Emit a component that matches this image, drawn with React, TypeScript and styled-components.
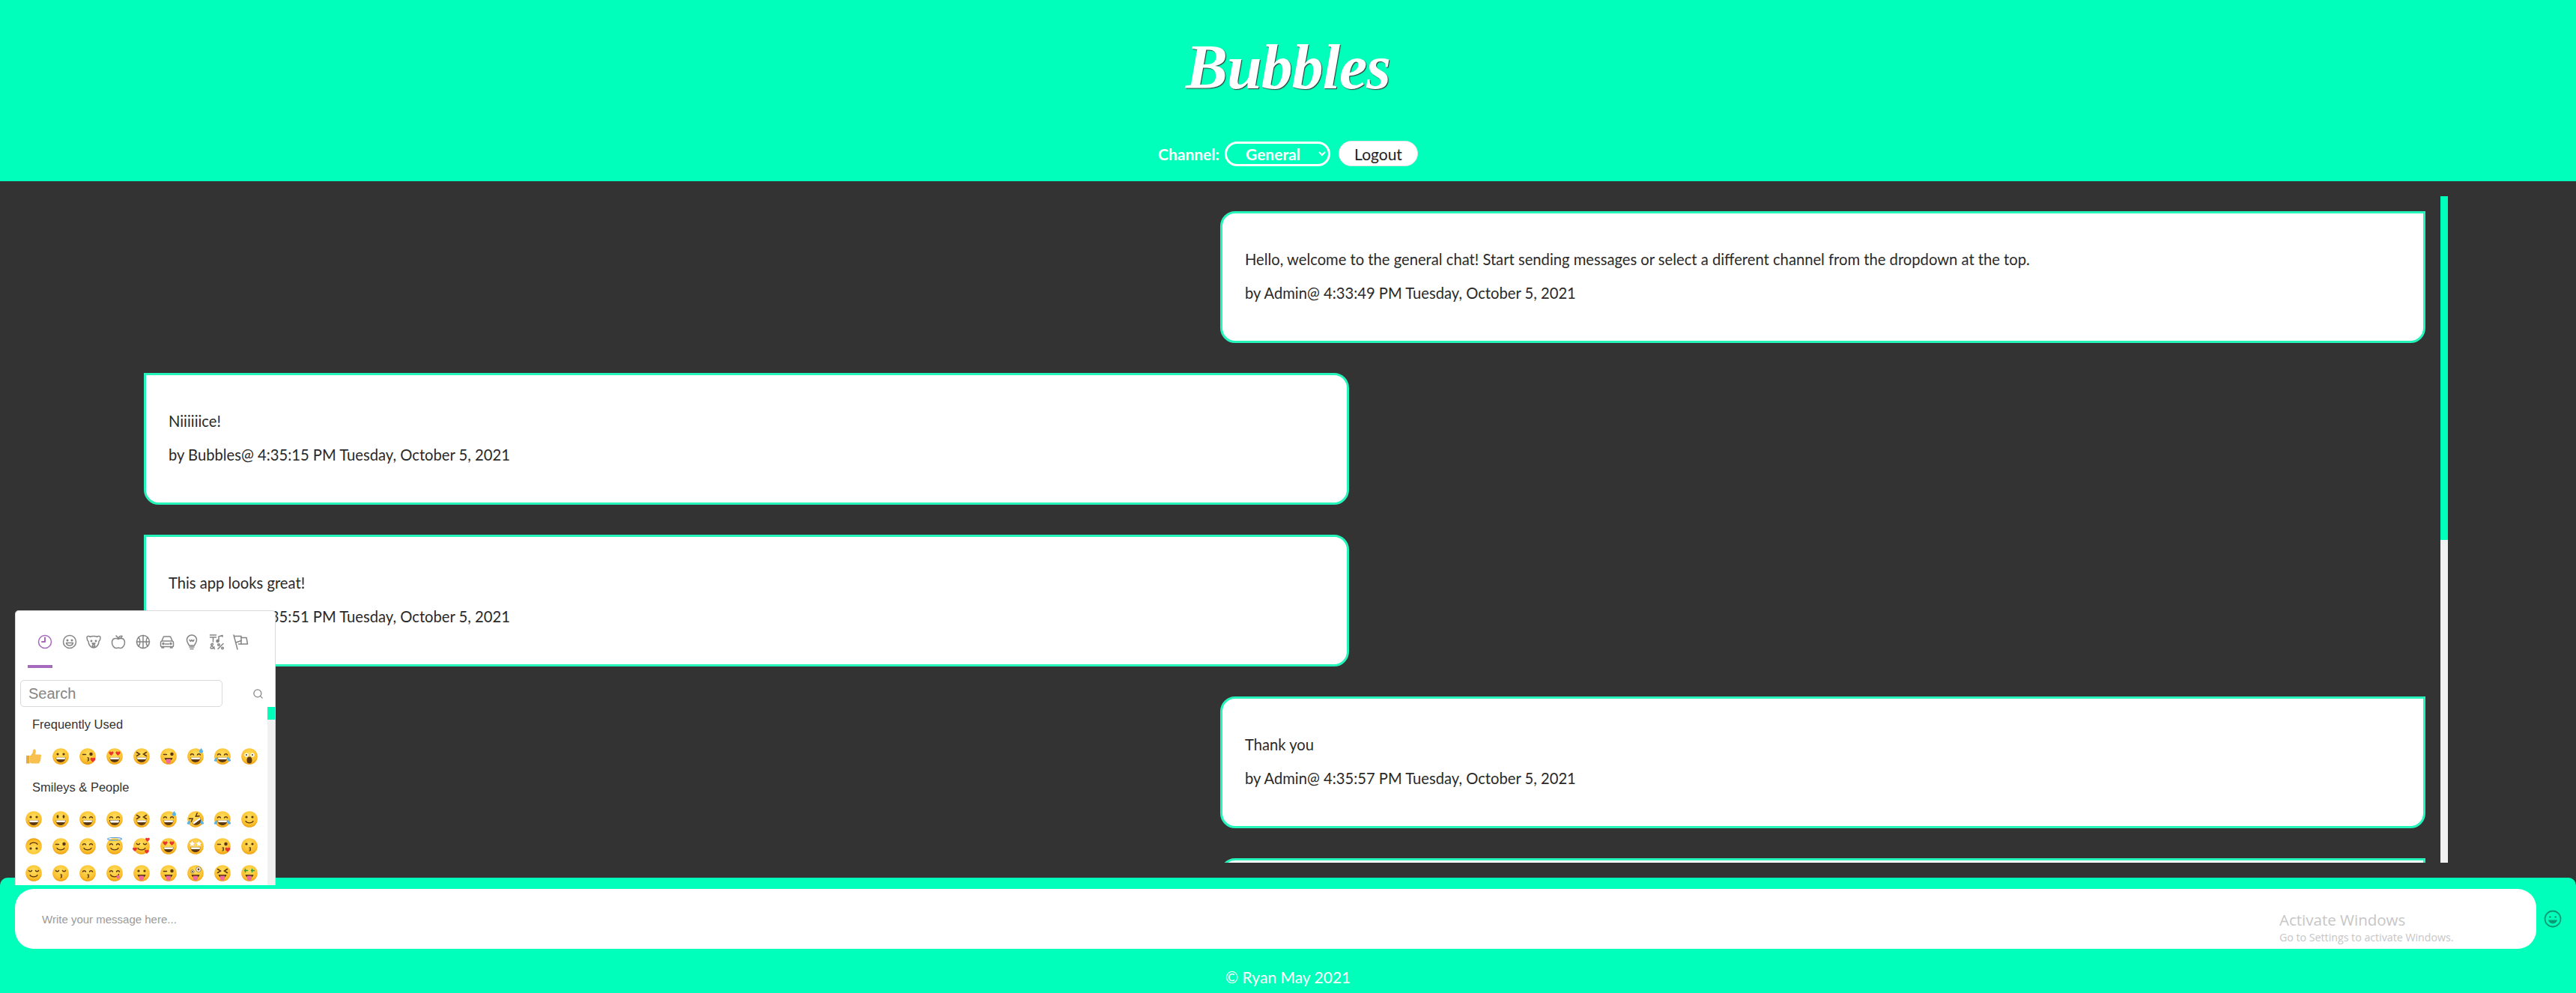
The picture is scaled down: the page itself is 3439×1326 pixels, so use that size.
import React from 'react'
import styled, { createGlobalStyle } from 'styled-components'
import { Search as SearchIcon } from 'lucide-react'

const GREEN = '#00ffba'
const FONT = 'Lato, "Open Sans", sans-serif'
const PICKER_FONT = '"Liberation Sans", Arial, sans-serif'

const GlobalStyle = createGlobalStyle`
  html, body {
    margin: 0;
    padding: 0;
    height: 100%;
    background: #333;
    overflow: hidden;
  }
  * { box-sizing: border-box; }
`

const Page = styled.div`
  height: 100vh;
  display: flex;
  flex-direction: column;
  font-family: ${FONT};
`

const Header = styled.header`
  height: 242px;
  background: ${GREEN};
  display: flex;
  flex-direction: column;
  align-items: center;
  flex: none;
`

const Logo = styled.h1`
  margin: 40px 0 0;
  height: 148px;
  font-family: "Liberation Serif", serif;
  font-style: italic;
  font-weight: 700;
  font-size: 84px;
  line-height: 100px;
  letter-spacing: -1px;
  color: #fff;
  text-shadow: 1px 1px 1px #333;
`

const Controls = styled.div`
  display: flex;
  align-items: center;
  height: 34px;
`

const ChannelLabel = styled.label`
  width: 89px;
  color: #fff;
  font-size: 21px;
  font-weight: 700;
`

const ChannelSelect = styled.select`
  width: 141px;
  height: 33px;
  border: 3px solid #fff;
  border-radius: 18px;
  background: transparent;
  color: #fff;
  font-family: ${FONT};
  font-size: 21px;
  font-weight: 700;
  text-align: center;
  outline: none;
`

const LogoutButton = styled.button`
  margin-left: 11px;
  width: 106px;
  height: 34px;
  border: 1px solid #e4e4e4;
  border-radius: 18px;
  background: #fff;
  color: #222;
  font-family: ${FONT};
  font-size: 21px;
  font-weight: 400;
`

const Main = styled.main`
  flex: 1;
  min-height: 0;
  background: #333;
  padding: 20px 171px 20px 172px;
  display: flex;
`

const MessageList = styled.div`
  flex: 1;
  overflow: hidden;
  padding: 20px 20px 0;
  display: flex;
  flex-direction: column;
  gap: 40px;
`

const ScrollTrack = styled.div<{ $width: number }>`
  flex: none;
  width: ${(p) => p.$width}px;
  background: #f1f1f1;
`

const ScrollThumb = styled.div<{ $height: number }>`
  height: ${(p) => p.$height}px;
  background: ${GREEN};
`

const Bubble = styled.div<{ $own?: boolean }>`
  flex: none;
  width: 1609px;
  height: 176px;
  align-self: ${(p) => (p.$own ? 'flex-end' : 'flex-start')};
  background: #fff;
  border: 3px solid #25f4bb;
  border-radius: ${(p) => (p.$own ? '20px 0 20px 20px' : '0 20px 20px 20px')};
  padding: 49px 30px 0;
  color: #2a2a2a;
  font-size: 20.2px;
  font-weight: 400;
`

const MessageLine = styled.p`
  margin: 0 0 20px;
  line-height: 25px;
  white-space: nowrap;
`

const Footer = styled.footer`
  position: relative;
  flex: none;
  height: 154px;
  background: ${GREEN};
  border-radius: 10px 10px 0 0;
  padding: 15px 20px 0;
`

const InputRow = styled.div`
  display: flex;
  align-items: center;
  gap: 10px;
`

const MessageInput = styled.input`
  flex: 1;
  height: 80px;
  border: none;
  border-radius: 25px;
  background: #fff;
  padding: 0 36px;
  font-family: ${PICKER_FONT};
  font-size: 15px;
  outline: none;
  &::placeholder { color: #9a9a9a; }
`

const SmileButton = styled.span`
  display: flex;
  width: 24px;
  height: 24px;
  margin-right: -1px;
  color: #0a9a75;
`

const Copyright = styled.div`
  margin-top: 25px;
  text-align: center;
  color: #fff;
  font-size: 21px;
  font-weight: 400;
`

const Watermark = styled.div`
  position: absolute;
  left: 3043px;
  top: 43px;
  font-family: "Open Sans", sans-serif;
  color: #c6c6c6;
  pointer-events: none;
`

const WatermarkTitle = styled.div`
  font-size: 20.5px;
  line-height: 27px;
  font-weight: 400;
`

const WatermarkText = styled.div`
  font-size: 14.2px;
  line-height: 19px;
  white-space: nowrap;
`

const Picker = styled.div`
  position: absolute;
  left: 20px;
  bottom: 144px;
  width: 348px;
  height: 367px;
  z-index: 5;
  background: #fff;
  border: 1px solid #d9d9d9;
  border-bottom: none;
  border-radius: 5px 5px 0 0;
  font-family: ${PICKER_FONT};
  display: flex;
  flex-direction: column;
`

const TabRow = styled.div`
  flex: none;
  display: flex;
  padding: 29px 0 0 22.5px;
`

const Tab = styled.span<{ $active?: boolean }>`
  display: flex;
  justify-content: center;
  width: 32.7px;
  height: 24px;
  color: ${(p) => (p.$active ? '#a569bd' : '#858585')};
`

const TabMark = styled.div`
  flex: none;
  width: 33px;
  height: 4px;
  margin: 19px 0 0 16px;
  background: #a569bd;
`

const SearchRow = styled.div`
  flex: none;
  display: flex;
  align-items: center;
  justify-content: space-between;
  padding: 16px 15px 0 6px;
  color: #858585;
`

const SearchInput = styled.input`
  width: 270px;
  height: 36px;
  border: 1px solid #d9d9d9;
  border-radius: 5px;
  padding: 0 10px;
  font-family: ${PICKER_FONT};
  font-size: 20px;
  outline: none;
  &::placeholder { color: #858585; }
`

const EmojiPane = styled.div`
  flex: 1;
  min-height: 0;
  display: flex;
`

const EmojiScroll = styled.div`
  flex: 1;
  overflow: hidden;
  padding-left: 6px;
`

const CategoryLabel = styled.div`
  padding: 13px 0 15px 16px;
  font-size: 16.5px;
  line-height: 20px;
  color: #333;
`

const EmojiGrid = styled.div`
  display: grid;
  grid-template-columns: repeat(9, 36px);
  grid-auto-rows: 36px;
`

const EmojiCell = styled.span`
  display: flex;
  align-items: center;
  justify-content: center;
`

type Eyes = 'dot' | 'tall' | 'happy' | 'x' | 'wink' | 'heart' | 'closed' | 'star' | 'crazy' | 'money' | 'wide'
type Mouth = 'grin' | 'teeth' | 'smile' | 'kiss' | 'tongue' | 'yum' | 'flat' | 'scream'
type Extra = 'sweat' | 'tears' | 'heart' | 'halo' | 'hearts'

interface FaceSpec {
  eyes: Eyes
  mouth: Mouth
  extra?: Extra
  rotate?: number
  thumb?: boolean
}

const HEART = 'M0 1.6C-1.6 .2-2.4-.6-2.4-1.5c0-.7.6-1.2 1.2-1.2.5 0 1 .3 1.2.7.2-.4.7-.7 1.2-.7.6 0 1.2.5 1.2 1.2C2.4-.6 1.6.2 0 1.6z'
const BROWN = '#5d3a12'

const FaceEyes = ({ eyes }: { eyes: Eyes }) => {
  const stroke = { stroke: BROWN, strokeWidth: 1.5, fill: 'none', strokeLinecap: 'round' as const }
  switch (eyes) {
    case 'tall':
      return <g fill={BROWN}><ellipse cx="8" cy="8.5" rx="1.4" ry="2.3" /><ellipse cx="16" cy="8.5" rx="1.4" ry="2.3" /></g>
    case 'happy':
      return <g {...stroke}><path d="M5.5 10c.6-1.8 3.4-1.8 4 0" /><path d="M14.5 10c.6-1.8 3.4-1.8 4 0" /></g>
    case 'x':
      return <g {...stroke}><path d="M5.5 6.5l4 2.5-4 2.5" /><path d="M18.5 6.5l-4 2.5 4 2.5" /></g>
    case 'wink':
      return <g {...stroke}><path d="M5.5 9.5h4" /><circle cx="16.5" cy="9" r="1.5" fill={BROWN} /></g>
    case 'heart':
      return (
        <g fill="#e8352e">
          <path d={HEART} transform="translate(7.5 9) scale(1.3)" />
          <path d={HEART} transform="translate(16.5 9) scale(1.3)" />
        </g>
      )
    case 'closed':
      return <g {...stroke}><path d="M5.5 8.5c.6 1.6 3.4 1.6 4 0" /><path d="M14.5 8.5c.6 1.6 3.4 1.6 4 0" /></g>
    case 'star':
      return (
        <g fill="#fff" stroke="#e0b060" strokeWidth=".5">
          <path d="M7.5 4l1.4 3 3 .4-2.2 2.1.6 3-2.8-1.5-2.8 1.5.6-3L3.1 7.4l3-.4z" />
          <path d="M16.5 4l1.4 3 3 .4-2.2 2.1.6 3-2.8-1.5-2.8 1.5.6-3-2.2-2.1 3-.4z" />
        </g>
      )
    case 'crazy':
      return (
        <g>
          <circle cx="8" cy="10" r="2.2" fill="#fff" stroke={BROWN} strokeWidth=".6" />
          <circle cx="8" cy="10" r="1" fill={BROWN} />
          <circle cx="16" cy="7" r="3.4" fill="#fff" stroke={BROWN} strokeWidth=".6" />
          <circle cx="16" cy="7" r="1.4" fill={BROWN} />
        </g>
      )
    case 'money':
      return <g {...stroke} stroke="#2e9a3a"><path d="M5.5 8.5h4M6.5 6.5v4" /><path d="M14.5 8.5h4M15.5 6.5v4" /></g>
    case 'wide':
      return (
        <g>
          <circle cx="8" cy="10" r="2.6" fill="#fff" />
          <circle cx="16" cy="10" r="2.6" fill="#fff" />
          <circle cx="8" cy="10" r="1" fill={BROWN} />
          <circle cx="16" cy="10" r="1" fill={BROWN} />
        </g>
      )
    default:
      return <g fill={BROWN}><circle cx="8" cy="9" r="1.6" /><circle cx="16" cy="9" r="1.6" /></g>
  }
}

const FaceMouth = ({ mouth }: { mouth: Mouth }) => {
  switch (mouth) {
    case 'teeth':
      return (
        <g>
          <path d="M5 13h14c0 4.2-3 7-7 7s-7-2.800-7-7z" fill={BROWN} />
          <path d="M6 13.500h12c0 1.800-.5 2.500-1 3H7c-.5-.5-1-1.200-1-3z" fill="#fff" />
        </g>
      )
    case 'smile':
      return <path d="M7 14.500c1.500 3.200 8.500 3.200 10 0" fill="none" stroke={BROWN} strokeWidth="1.300" strokeLinecap="round" />
    case 'kiss':
      return <path d="M12 13.500c2 .3 2 1.800.6 2.300 1.400.5 1.400 2-.6 2.300" fill="none" stroke={BROWN} strokeWidth="1.200" strokeLinecap="round" />
    case 'tongue':
      return (
        <g>
          <path d="M6.500 14h11c-.5 2-1.500 3-2.500 3.400H9c-1-.4-2-1.400-2.500-3.400z" fill={BROWN} />
          <path d="M9 15.500h6v3.500c0 1.600-1.300 2.700-3 2.700s-3-1.100-3-2.700z" fill="#f06a9b" />
        </g>
      )
    case 'yum':
      return (
        <g>
          <path d="M6.500 14c1.800 3.800 9 4 11-.5" fill="none" stroke={BROWN} strokeWidth="1.300" strokeLinecap="round" />
          <circle cx="16.800" cy="17" r="2.200" fill="#f06a9b" />
        </g>
      )
    case 'flat':
      return <path d="M9 16h6" stroke={BROWN} strokeWidth="1.300" strokeLinecap="round" />
    case 'scream':
      return <ellipse cx="12" cy="17" rx="3.500" ry="4.500" fill={BROWN} />
    default:
      return (
        <g>
          <path d="M5.500 13.500h13c0 3.800-2.800 6.500-6.500 6.500s-6.500-2.700-6.500-6.500z" fill={BROWN} />
          <path d="M6 13.500h12c0 1-.2 1.800-.5 2.500h-11c-.3-.7-.5-1.500-.5-2.500z" fill="#fff" />
        </g>
      )
  }
}

const FaceExtra = ({ extra }: { extra: Extra }) => {
  switch (extra) {
    case 'sweat':
      return <path d="M19.500 1c1.200 1.700 2.500 3 2.500 4.300a2.500 2.500 0 0 1-5 0C17 4 18.300 2.700 19.500 1z" fill="#5cb3ea" />
    case 'tears':
      return (
        <g fill="#5cb3ea">
          <path d="M4.500 12.500C3 15 .6 16 .8 17.500c.2 1.300 2.400 1.700 3.400 1 1.300-1 1.200-3.800.3-6z" />
          <path d="M19.500 12.500c1.500 2.500 3.900 3.500 3.700 5-.2 1.300-2.400 1.700-3.400 1-1.300-1-1.200-3.800-.3-6z" />
        </g>
      )
    case 'heart':
      return <path d={HEART} transform="translate(19 17.500) scale(1.400)" fill="#e8352e" />
    case 'halo':
      return <ellipse cx="12" cy="2.300" rx="9.500" ry="1.800" fill="none" stroke="#5c9bdc" strokeWidth="1.200" />
    default:
      return (
        <g fill="#e8352e">
          <path d={HEART} transform="translate(20 4) scale(1.200)" />
          <path d={HEART} transform="translate(3 17) scale(1.200)" />
          <path d={HEART} transform="translate(19 20) scale(1.200)" />
        </g>
      )
  }
}

const Emoji = ({ spec }: { spec: FaceSpec }) => {
  if (spec.thumb) {
    return (
      <svg width="24" height="24" viewBox="0 0 24 24">
        <path d="M2 11h4.500v10.500H2z" fill="#e9a93c" />
        <path d="M7 11.500c2.500-1.500 4-4.500 4.300-8 .1-1.500 3.200-1.700 3.500 1 .2 1.800-.5 3.800-1 5h6.500c2.200 0 2.300 3 .7 3.400 1.300.8 1 2.900-.4 3.200 1 1 .5 2.800-.8 3 .5 1.200-.2 2.400-1.700 2.400H11c-2 0-3-.6-4-1z" fill="#f7c04f" />
      </svg>
    )
  }
  return (
    <svg width="24" height="24" viewBox="0 0 24 24">
      <g transform={spec.rotate ? `rotate(${spec.rotate} 12 12)` : undefined}>
        <circle cx="12" cy="12" r="10.800" fill="url(#emojiFace)" />
        <FaceEyes eyes={spec.eyes} />
        <FaceMouth mouth={spec.mouth} />
      </g>
      {spec.extra && <FaceExtra extra={spec.extra} />}
    </svg>
  )
}

const FREQUENT: FaceSpec[] = [
  { eyes: 'dot', mouth: 'grin', thumb: true },
  { eyes: 'dot', mouth: 'grin' },
  { eyes: 'wink', mouth: 'kiss', extra: 'heart' },
  { eyes: 'heart', mouth: 'grin' },
  { eyes: 'x', mouth: 'grin' },
  { eyes: 'wink', mouth: 'tongue' },
  { eyes: 'happy', mouth: 'grin', extra: 'sweat' },
  { eyes: 'happy', mouth: 'grin', extra: 'tears' },
  { eyes: 'wide', mouth: 'scream' },
]

const SMILEYS: FaceSpec[] = [
  { eyes: 'dot', mouth: 'grin' },
  { eyes: 'tall', mouth: 'grin' },
  { eyes: 'happy', mouth: 'grin' },
  { eyes: 'happy', mouth: 'teeth' },
  { eyes: 'x', mouth: 'grin' },
  { eyes: 'happy', mouth: 'grin', extra: 'sweat' },
  { eyes: 'x', mouth: 'grin', rotate: -35, extra: 'tears' },
  { eyes: 'happy', mouth: 'grin', extra: 'tears' },
  { eyes: 'dot', mouth: 'smile' },
  { eyes: 'dot', mouth: 'smile', rotate: 180 },
  { eyes: 'wink', mouth: 'smile' },
  { eyes: 'happy', mouth: 'smile' },
  { eyes: 'happy', mouth: 'smile', extra: 'halo' },
  { eyes: 'closed', mouth: 'smile', extra: 'hearts' },
  { eyes: 'heart', mouth: 'grin' },
  { eyes: 'star', mouth: 'grin' },
  { eyes: 'wink', mouth: 'kiss', extra: 'heart' },
  { eyes: 'dot', mouth: 'kiss' },
  { eyes: 'closed', mouth: 'smile' },
  { eyes: 'closed', mouth: 'kiss' },
  { eyes: 'happy', mouth: 'kiss' },
  { eyes: 'happy', mouth: 'yum' },
  { eyes: 'dot', mouth: 'tongue' },
  { eyes: 'wink', mouth: 'tongue' },
  { eyes: 'crazy', mouth: 'tongue' },
  { eyes: 'x', mouth: 'tongue' },
  { eyes: 'money', mouth: 'tongue' },
]

const iconProps = {
  width: 24,
  height: 24,
  viewBox: '0 0 24 24',
  fill: 'none',
  stroke: 'currentColor',
  strokeWidth: 1.500,
  strokeLinecap: 'round' as const,
  strokeLinejoin: 'round' as const,
}

const tabIcons = [
  <svg key="recent" {...iconProps}>
    <circle cx="12" cy="12" r="8.500" />
    <path d="M12 6.500V12H8" strokeWidth="2" />
  </svg>,
  <svg key="people" {...iconProps}>
    <circle cx="12" cy="12" r="8.500" />
    <circle cx="9" cy="10" r=".8" fill="currentColor" />
    <circle cx="15" cy="10" r=".8" fill="currentColor" />
    <path d="M7.500 13.500h9c-.5 2.300-2.300 3.500-4.500 3.500s-4-1.200-4.500-3.500z" />
  </svg>,
  <svg key="nature" {...iconProps}>
    <path d="M7.500 5.500C9 4 15 4 16.500 5.500c1.500-1.500 4.500-1.200 4.500.5 0 2-.7 4.500-2 5.500 0 4-3 8.500-7 8.500s-7-4.500-7-8.500C3.700 10.500 3 8 3 6c0-1.700 3-2 4.500-.5z" />
    <circle cx="9" cy="11" r=".7" fill="currentColor" />
    <circle cx="15" cy="11" r=".7" fill="currentColor" />
    <path d="M10 14h4l-2 2zM10.500 16.500v2h3v-2" />
  </svg>,
  <svg key="foods" {...iconProps}>
    <path d="M12 8.500C9 6.500 3.500 7 3.500 13c0 4 3 7.500 5.500 7.500 1.200 0 2-.5 3-.5s1.800.5 3 .5c2.500 0 5.500-3.500 5.500-7.500 0-6-5.500-6.500-8.500-4.500z" />
    <path d="M12 8.500c-.3-2-1.300-3.500-3-4.500M12 7c1-2 3-3 5-2.500-.5 2-2.500 3.300-5 2.500z" />
  </svg>,
  <svg key="activity" {...iconProps}>
    <circle cx="12" cy="12" r="8.500" />
    <path d="M12 3.500v17M3.500 12h17M6 6c2.500 2.500 2.500 9.500 0 12M18 6c-2.500 2.500-2.500 9.500 0 12" />
  </svg>,
  <svg key="places" {...iconProps}>
    <path d="M5 11l2-5c.3-.8 1-1 1.800-1h6.400c.8 0 1.500.2 1.800 1l2 5c1 .4 1.500 1 1.500 2v4.500c0 .8-.5 1-1 1H4.500c-.5 0-1-.2-1-1V13c0-1 .5-1.600 1.500-2zM5 11h14" />
    <path d="M5 18.500V20h2.500v-1.500M16.500 18.500V20H19v-1.500M9.500 15h5" />
    <circle cx="7" cy="14.500" r="1" />
    <circle cx="17" cy="14.500" r="1" />
  </svg>,
  <svg key="objects" {...iconProps}>
    <path d="M8.500 17c-.3-2-3-3.500-3-7.500a6.500 6.500 0 0 1 13 0c0 4-2.700 5.500-3 7.500z" />
    <path d="M9 9.500l1.500 2 1.500-2 1.500 2 1.500-2M9 19h6M10 21.500h4" />
  </svg>,
  <svg key="symbols" {...iconProps}>
    <path d="M3.500 3h8M3.500 6h8M7.500 6v6M15 11V5l5-1.500v1.800" />
    <circle cx="13.500" cy="11" r="1.500" fill="currentColor" />
    <path d="M9.500 21.500L5 16.500c-1-1.500 1.500-3 2.500-1.500.8 1.500-4 3-3.500 5 .4 1.700 3.500 1.500 5-1M14 21.500l7-7" />
    <circle cx="15" cy="16" r="1.300" />
    <circle cx="20" cy="20.500" r="1.300" />
  </svg>,
  <svg key="flags" {...iconProps}>
    <path d="M3 3l5 19M4 4.500h9v6l-7 2.500" />
    <path d="M13 6.500h7l1.500 8.500H9.500" />
    <path d="M13 10.500v4.500" />
  </svg>,
]

const messages = [
  {
    own: true,
    text: 'Hello, welcome to the general chat! Start sending messages or select a different channel from the dropdown at the top.',
    by: 'by Admin@ 4:33:49 PM Tuesday, October 5, 2021',
  },
  { own: false, text: 'Niiiiiice!', by: 'by Bubbles@ 4:35:15 PM Tuesday, October 5, 2021' },
  { own: false, text: 'This app looks great!', by: 'by Bubbles@ 4:35:51 PM Tuesday, October 5, 2021' },
  { own: true, text: 'Thank you', by: 'by Admin@ 4:35:57 PM Tuesday, October 5, 2021' },
]

const App = () => {
  return (
    <Page>
      <GlobalStyle />
      <svg width="0" height="0" style={{ position: 'absolute' }}>
        <defs>
          <radialGradient id="emojiFace" cx="50%" cy="35%" r="70%">
            <stop offset="0%" stopColor="#ffdf5e" />
            <stop offset="70%" stopColor="#fbbf2c" />
            <stop offset="100%" stopColor="#e8930c" />
          </radialGradient>
        </defs>
      </svg>
      <Header>
        <Logo>Bubbles</Logo>
        <Controls>
          <ChannelLabel>Channel:</ChannelLabel>
          <ChannelSelect defaultValue="General">
            <option>General</option>
          </ChannelSelect>
          <LogoutButton>Logout</LogoutButton>
        </Controls>
      </Header>
      <Main>
        <MessageList>
          {messages.map((m) => (
            <Bubble key={m.by} $own={m.own}>
              <MessageLine>{m.text}</MessageLine>
              <MessageLine>{m.by}</MessageLine>
            </Bubble>
          ))}
          <Bubble $own />
        </MessageList>
        <ScrollTrack $width={10}>
          <ScrollThumb $height={459} />
        </ScrollTrack>
      </Main>
      <Footer>
        <Picker>
          <TabRow>
            {tabIcons.map((icon, i) => (
              <Tab key={icon.key} $active={i === 0}>{icon}</Tab>
            ))}
          </TabRow>
          <TabMark />
          <SearchRow>
            <SearchInput placeholder="Search" />
            <SearchIcon size={15} strokeWidth={2} />
          </SearchRow>
          <EmojiPane>
            <EmojiScroll>
              <CategoryLabel>Frequently Used</CategoryLabel>
              <EmojiGrid>
                {FREQUENT.map((spec, i) => (
                  <EmojiCell key={i}><Emoji spec={spec} /></EmojiCell>
                ))}
              </EmojiGrid>
              <CategoryLabel>Smileys &amp; People</CategoryLabel>
              <EmojiGrid>
                {SMILEYS.map((spec, i) => (
                  <EmojiCell key={i}><Emoji spec={spec} /></EmojiCell>
                ))}
              </EmojiGrid>
            </EmojiScroll>
            <ScrollTrack $width={10}>
              <ScrollThumb $height={17} />
            </ScrollTrack>
          </EmojiPane>
        </Picker>
        <InputRow>
          <MessageInput placeholder="Write your message here..." />
          <SmileButton>
            <svg viewBox="0 0 24 24" width="24" height="24" fill="none" stroke="currentColor" strokeWidth="1.800">
              <circle cx="12" cy="12" r="10.500" />
              <circle cx="8.300" cy="9.500" r="1.300" fill="currentColor" stroke="none" />
              <circle cx="15.700" cy="9.500" r="1.300" fill="currentColor" stroke="none" />
              <path d="M6 13.500h12c-.6 3-3 4.800-6 4.800s-5.400-1.800-6-4.800z" fill="currentColor" stroke="none" />
            </svg>
          </SmileButton>
        </InputRow>
        <Copyright>© Ryan May 2021</Copyright>
        <Watermark>
          <WatermarkTitle>Activate Windows</WatermarkTitle>
          <WatermarkText>Go to Settings to activate Windows.</WatermarkText>
        </Watermark>
      </Footer>
    </Page>
  )
}

export default App
